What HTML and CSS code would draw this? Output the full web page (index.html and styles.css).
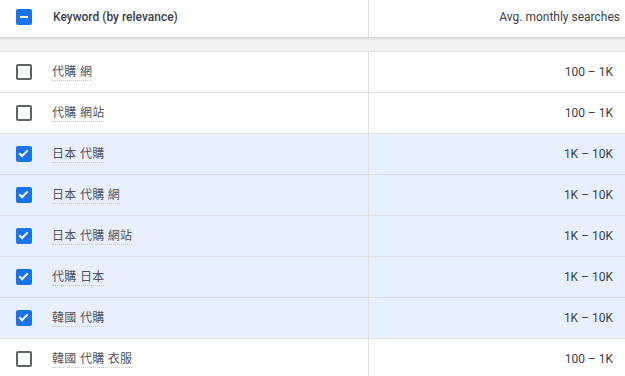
FILE: index.html
```html
<!DOCTYPE html>
<html lang="zh-Hant">
<head>
    <meta charset="UTF-8">
    <title>Keyword ideas</title>
    <link rel="stylesheet" href="styles.css">
</head>
<body>
    <div class="table">
        <div class="row head">
            <div class="cell kw">
                <span class="box partial"></span>
                <span class="label">Keyword (by relevance)</span>
            </div>
            <div class="cell num">Avg. monthly searches</div>
        </div>
        <div class="band"><div class="cell kw"></div><div class="cell num"></div></div>

        <div class="row">
            <div class="cell kw"><span class="box"></span><span class="word">代購 網</span></div>
            <div class="cell num">100 – 1K</div>
        </div>
        <div class="row">
            <div class="cell kw"><span class="box"></span><span class="word">代購 網站</span></div>
            <div class="cell num">100 – 1K</div>
        </div>
        <div class="row picked">
            <div class="cell kw"><span class="box checked"></span><span class="word">日本 代購</span></div>
            <div class="cell num">1K – 10K</div>
        </div>
        <div class="row picked">
            <div class="cell kw"><span class="box checked"></span><span class="word">日本 代購 網</span></div>
            <div class="cell num">1K – 10K</div>
        </div>
        <div class="row picked">
            <div class="cell kw"><span class="box checked"></span><span class="word">日本 代購 網站</span></div>
            <div class="cell num">1K – 10K</div>
        </div>
        <div class="row picked">
            <div class="cell kw"><span class="box checked"></span><span class="word">代購 日本</span></div>
            <div class="cell num">1K – 10K</div>
        </div>
        <div class="row picked">
            <div class="cell kw"><span class="box checked"></span><span class="word">韓國 代購</span></div>
            <div class="cell num">1K – 10K</div>
        </div>
        <div class="row">
            <div class="cell kw"><span class="box"></span><span class="word">韓國 代購 衣服</span></div>
            <div class="cell num">100 – 1K</div>
        </div>
    </div>
</body>
</html>
```

FILE: styles.css
```css
body {
    margin: 0;
    background: #fff;
    font-family: Roboto, "Noto Sans CJK TC", sans-serif;
    font-size: 12px;
    color: #3c4043;
    overflow: hidden;
}

.table {
    width: 625px;
}

.row, .band {
    display: grid;
    grid-template-columns: 369px 1fr;
    height: 40px;
    border-bottom: 1px solid #e0e0e0;
}

.cell {
    display: flex;
    align-items: center;
}

.cell.kw {
    border-right: 1px solid #e0e0e0;
}

.cell.num {
    justify-content: flex-end;
    padding-right: 12px;
}

.head {
    height: 37px;
    border-bottom: 1px solid #d6d6d6;
    box-shadow: 0 1px 2px rgba(0, 0, 0, 0.12);
    position: relative;
}

.head .cell {
    color: #3c4043;
    padding-bottom: 4px;
}

.head .label {
    font-weight: 500;
    padding-left: 1px;
}

.head .cell.num {
    padding-right: 5px;
}

.band {
    height: 13px;
    background: #f3f3f3;
}

.band .cell.kw {
    border-right-color: #f3f3f3;
}

.picked {
    background: #e8f0fe;
}

.box {
    width: 12px;
    height: 12px;
    border: 2px solid #5f6368;
    border-radius: 2px;
    margin: 0 20px 0 16px;
    position: relative;
    flex: none;
}

.box.checked, .box.partial {
    background: #1a73e8;
    border-color: #1a73e8;
}

.box.checked::after {
    content: "";
    position: absolute;
    left: 3px;
    top: 0px;
    width: 3px;
    height: 7px;
    border: solid #fff;
    border-width: 0 2px 2px 0;
    transform: rotate(45deg);
}

.box.partial::after {
    content: "";
    position: absolute;
    left: 2px;
    top: 5px;
    width: 8px;
    height: 2px;
    background: #fff;
}

.word {
    font-size: 12px;
    color: #4f5256;
    padding-top: 1px;
    border-bottom: 1px dotted #c4c7cb;
    line-height: 15px;
    letter-spacing: 0.3px;
}
```
